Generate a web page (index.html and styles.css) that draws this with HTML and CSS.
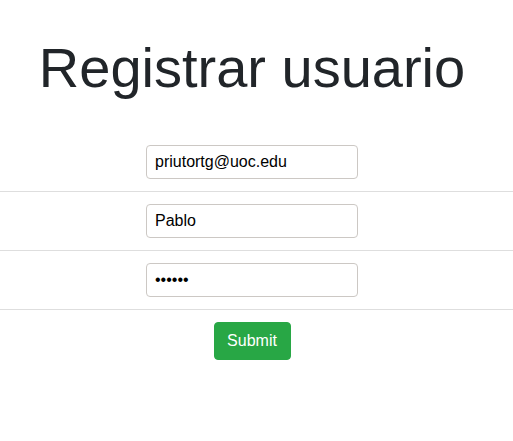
FILE: index.html
```html
<!DOCTYPE html>
<html>
<head>
<meta charset="utf-8">
<link rel="stylesheet" href="styles.css">
</head>
<body>
<div class="page">
  <h1 class="title">Registrar usuario</h1>
  <form class="form">
    <div class="row"><input class="field" type="email" value="priutortg@uoc.edu"></div>
    <hr class="sep">
    <div class="row"><input class="field" type="text" value="Pablo"></div>
    <hr class="sep">
    <div class="row"><input class="field" type="password" value="123456"></div>
    <hr class="sep">
    <div class="row"><button class="btn" type="button">Submit</button></div>
  </form>
</div>
</body>
</html>
```
FILE: styles.css
```css
html, body {
  margin: 0;
  padding: 0;
  background: #fff;
}
body {
  font-family: "Liberation Sans", Arial, sans-serif;
  color: #212529;
}
.page {
  display: flex;
  flex-direction: column;
}
.title {
  margin: 34px 0 0 0;
  padding-right: 9px;
  font-size: 56px;
  font-weight: 400;
  line-height: 1.2;
  text-align: center;
  color: #212529;
}
.form {
  margin-top: 44px;
  display: flex;
  flex-direction: column;
}
.row {
  display: flex;
  justify-content: center;
  padding-right: 9px;
}
.field {
  box-sizing: border-box;
  width: 212px;
  height: 34px;
  padding: 0 8px;
  font-family: "Liberation Sans", Arial, sans-serif;
  font-size: 16px;
  color: #000;
  border: 1px solid #ccc8c4;
  border-radius: 4px;
  background: #fff;
  outline: none;
}
.sep {
  width: 100%;
  margin: 12px 0;
  border: 0;
  border-top: 1px solid #dedede;
  height: 0;
}
.btn {
  box-sizing: border-box;
  height: 38px;
  width: 77px;
  padding: 0;
  font-family: "Liberation Sans", Arial, sans-serif;
  font-size: 16px;
  color: #fff;
  background: #28a745;
  border: 1px solid #28a745;
  border-radius: 4px;
}
```
